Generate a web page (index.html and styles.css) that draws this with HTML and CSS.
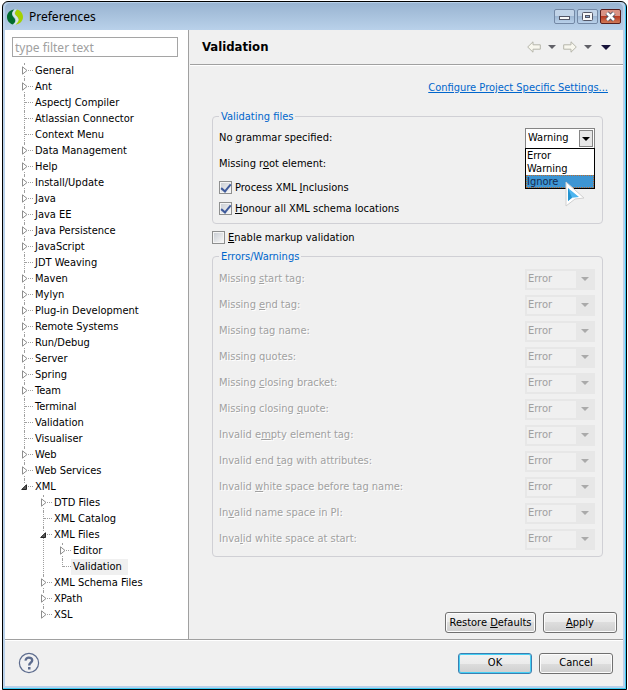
FILE: index.html
```html
<!DOCTYPE html>
<html lang="en">
<head>
<meta charset="utf-8">
<title>Preferences</title>
<link rel="stylesheet" href="styles.css">
<script src="preferences.js" defer></script>
</head>
<body>
<div class="window">
  <header class="titlebar">
    <svg class="logo" width="16" height="16" viewBox="0 0 16 16" aria-hidden="true">
      <path d="M7.500.5C3 .8 0 4 0 8c0 3.600 2.400 6.500 5.500 7.400C7.500 14.500 8.500 13 8.200 11 7.800 8.500 4.800 7.500 5 4.500 5.200 2.500 6.500 1.500 7.500.5z" fill="#006b2d"/>
      <path d="M10 .6C13.500 1.500 16 4.500 16 8c0 4-3.200 7.200-7.500 7.600C10 14 12 12.500 11.700 10.300 11.300 7.500 8 6.500 8 4.200 8.100 2.500 9.500 1.600 10 .6z" fill="#a4d100"/>
      <path d="M7.500.5C6.500 2 5.200 3 5.500 5c.5 2.500 3.500 3.500 3.500 6 0 1.800-1 3.300-2.500 4.400h2C10 14 11.500 12.500 11.200 10.300 10.800 7.500 7.600 6.500 7.600 4.200 7.700 2.500 9 1.600 9.600.5z" fill="#d9e8e4"/>
    </svg>
    <h1>Preferences</h1>
    <div class="window-controls">
      <button type="button" aria-label="Minimize"><svg width="19" height="13" viewBox="0 0 19 13"><rect x="4.500" y="6.500" width="10" height="3" fill="#f8f8f8" stroke="#535666"/></svg></button>
      <button type="button" aria-label="Maximize"><svg width="19" height="13" viewBox="0 0 19 13"><rect x="4.500" y="2.500" width="10" height="8" rx="1" fill="#f8f8f8" stroke="#535666"/><rect x="7.500" y="5.500" width="4" height="2" fill="#8fa9cc" stroke="#535666"/></svg></button>
      <button type="button" class="close" aria-label="Close"><svg width="19" height="13" viewBox="0 0 19 13"><path d="M6 3l7 7M13 3l-7 7" stroke="#535666" stroke-width="4.500"/><path d="M6 3l7 7M13 3l-7 7" stroke="#fff" stroke-width="2.500"/></svg></button>
    </div>
  </header>
  <main class="panes">
    <nav class="sidebar" aria-label="Preference pages">
      <input class="filter" type="text" placeholder="type filter text" aria-label="Filter">
      <ul class="tree" id="tree"></ul>
    </nav>
    <section class="page">
      <div class="page-head">
        <h2>Validation</h2>
        <div class="history">
          <button type="button" aria-label="Back"><svg width="14" height="12" viewBox="0 0 14 12"><path d="M.7 6L6 .8v3h7.300v4.400H6v3z" fill="#f8f7ee" stroke="#b5b5aa"/></svg></button>
          <button type="button" aria-label="Back history"><svg width="8" height="4" viewBox="0 0 8 4"><path d="M0 0h8L4 4z" fill="#606067"/></svg></button>
          <button type="button" aria-label="Forward"><svg width="14" height="12" viewBox="0 0 14 12"><path d="M13.300 6L8 .8v3H.7v4.400H8v3z" fill="#f8f7ee" stroke="#b5b5aa"/></svg></button>
          <button type="button" aria-label="Forward history"><svg width="8" height="4" viewBox="0 0 8 4"><path d="M0 0h8L4 4z" fill="#606067"/></svg></button>
          <button type="button" class="menu" aria-label="Menu"><svg width="10" height="5" viewBox="0 0 10 5"><path d="M0 0h10L5 5z" fill="#17133a"/></svg></button>
        </div>
      </div>
      <form class="page-body">
        <a class="project-link" href="#">Configure Project Specific Settings...</a>
        <fieldset class="group">
          <legend>Validating files</legend>
          <div class="row">
            <label for="grammar">No <u>g</u>rammar specified:</label>
            <div class="combo">
              <select id="grammar"><option>Error</option><option selected>Warning</option><option>Ignore</option></select>
              <svg class="arrow" width="14" height="17" viewBox="0 0 14 17"><rect x=".5" y=".5" width="13" height="16" fill="#e7e7e7" stroke="#858585"/><path d="M3 7h8l-4 4z"/></svg>
              <ul class="dropdown"><li>Error</li><li>Warning</li><li class="active">Ignore</li></ul>
              <svg class="cursor" width="20" height="26" viewBox="0 0 20 26"><path d="M1 1l18 16-9 1-9 7z" fill="#fff" stroke="#d0d0d0"/><path d="M3 7l11 9-7 .7L3 20z" fill="#4db5ef"/><path d="M3 7l4 9.700L3 20z" fill="#2594d0"/></svg>
            </div>
          </div>
          <div class="row"><span>Missing r<u>o</u>ot element:</span></div>
          <label class="check"><input type="checkbox" checked><span>Process XML <u>I</u>nclusions</span></label>
          <label class="check"><input type="checkbox" checked><span><u>H</u>onour all XML schema locations</span></label>
        </fieldset>
        <label class="check enable"><input type="checkbox"><span><u>E</u>nable markup validation</span></label>
        <fieldset class="group severity" id="severity">
          <legend>Errors/Warnings</legend>
        </fieldset>
        <div class="page-actions">
          <button type="button" class="btn wide">Restore <u>D</u>efaults</button>
          <button type="button" class="btn short"><u>A</u>pply</button>
        </div>
      </form>
    </section>
  </main>
  <footer class="footer">
    <button type="button" class="help" aria-label="Help"><svg width="22" height="22" viewBox="0 0 22 22"><circle cx="11" cy="11" r="9.600" fill="#f1f1f2" stroke="#5d6c8e" stroke-width="1.200"/><path d="M7.700 8.600C7.500 4.600 14.200 4.700 14.200 8.300c0 2.400-3 2.400-3 5.200" fill="none" stroke="#5d6c8e" stroke-width="2.400"/><rect x="10" y="15" width="2.500" height="2.500" fill="#5d6c8e"/></svg></button>
    <button type="button" class="btn short primary">OK</button>
    <button type="button" class="btn short">Cancel</button>
  </footer>
</div>
</body>
</html>
```
FILE: preferences.js
```js
const pages = [
  ['General', []], ['Ant', []], ['AspectJ Compiler'], ['Atlassian Connector'], ['Context Menu'],
  ['Data Management', []], ['Help', []], ['Install/Update', []], ['Java', []], ['Java EE', []],
  ['Java Persistence', []], ['JavaScript', []], ['JDT Weaving'], ['Maven', []], ['Mylyn', []],
  ['Plug-in Development', []], ['Remote Systems', []], ['Run/Debug', []], ['Server', []],
  ['Spring', []], ['Team', []], ['Terminal'], ['Validation'], ['Visualiser'], ['Web', []],
  ['Web Services', []],
  ['XML', [
    ['DTD Files', []], ['XML Catalog'],
    ['XML Files', [['Editor', []], ['Validation', null, true]]],
    ['XML Schema Files', []], ['XPath', []], ['XSL', []],
  ]],
];

const closedIcon = '<svg class="twisty" width="6" height="9" viewBox="0 0 6 9"><path d="M.5.8v7.400L5 4.500z" fill="#fff" stroke="#8e8e8e"/></svg>';
const openIcon = '<svg class="twisty open" width="6" height="6" viewBox="0 0 6 6"><path d="M5.500.7v4.800H.7z" fill="#595959" stroke="#262626"/></svg>';

function renderTree(list, items) {
  for (const [name, children, selected] of items) {
    const item = document.createElement('li');
    const icon = children ? (children.length ? openIcon : closedIcon) : '';
    item.innerHTML = `<div class="node">${icon}<a href="#"${selected ? ' class="selected"' : ''}>${name}</a></div>`;
    if (children && children.length) {
      const sub = document.createElement('ul');
      renderTree(sub, children);
      item.append(sub);
    }
    list.append(item);
  }
}
renderTree(document.getElementById('tree'), pages);

const rules = [
  'Missing <u>s</u>tart tag:', 'Missing <u>e</u>nd tag:', 'Missing tag name:', 'Missing quotes:',
  'Missing <u>c</u>losing bracket:', 'Missing closing <u>q</u>uote:', 'Invalid e<u>m</u>pty element tag:',
  'Invalid end <u>t</u>ag with attributes:', 'Invalid <u>w</u>hite space before tag name:',
  'In<u>v</u>alid name space in PI:', 'Inva<u>l</u>id white space at start:',
];
const severity = document.getElementById('severity');
rules.forEach((text, i) => {
  severity.insertAdjacentHTML('beforeend', `<div class="row disabled"><label for="rule${i}">${text}</label>
    <div class="combo"><select id="rule${i}" disabled><option>Error</option></select>
    <svg class="arrow" width="17" height="17" viewBox="0 0 17 17"><rect width="17" height="17" fill="#e7e7e7"/><path d="M5 6h8l-4 4z" fill="#aaa"/></svg></div></div>`);
});
```
FILE: styles.css
```css
* { box-sizing: border-box; }

body {
  margin: 0;
  background: #fff;
  color: #000;
  font: 11px/16px "DejaVu Sans Condensed", "DejaVu Sans", sans-serif;
}

h1, h2, ul { margin: 0; padding: 0; font-size: inherit; font-weight: normal; list-style: none; }
button, input, select { font: inherit; color: inherit; }
button { cursor: default; }
svg { display: block; }
u { text-underline-offset: 1px; }

.window {
  display: flex;
  flex-direction: column;
  min-height: calc(100vh - 2px);
  margin: 1px 1px 1px 2px;
  border: 1px solid #000;
  border-radius: 6px 6px 0 0;
  background: #b9d1ea;
  padding: 1px 3px 3px 2px;
  box-shadow: inset -1px -1px 0 #3ccbf4;
}

.titlebar {
  display: flex;
  align-items: center;
  height: 27px;
  padding: 0 2px;
  border-radius: 5px 5px 0 0;
  background: linear-gradient(#99b4d1, #b9d1ea);
  gap: 6px;
}
.titlebar h1 { flex: 1; font-family: "Noto Sans", sans-serif; font-size: 12px; }
.window-controls { display: flex; gap: 2px; }
.window-controls button {
  padding: 0;
  border: 1px solid #7388a5;
  border-radius: 2px;
  background: linear-gradient(#c2d4e8 50%, #9fb8d4 50%, #b9d1ea);
}
.window-controls .close { border-color: #571e1e; background: linear-gradient(#d99284 50%, #b83a22 50%, #d07a58); }

.panes { display: flex; flex: 1; background: #f0f0f0; }

.sidebar {
  width: 184px;
  padding: 7px 10px 16px 7px;
  border-right: 1px solid #a0a0a0;
  background: #fff;
}
.filter {
  display: block;
  width: 100%;
  height: 20px;
  padding: 0 2px;
  border: 1px solid #a5a5a5;
  font-family: "Noto Sans", sans-serif;
  font-size: 12px;
}
.filter::placeholder { color: #a0a0a0; opacity: 1; }

.tree { padding: 6px 0 0 12px; }
.tree li { position: relative; }
.tree ul { padding-left: 19px; }
.tree li::before {
  content: "";
  position: absolute;
  top: 0;
  bottom: 0;
  left: 0;
  border-left: 1px dotted #a0a0a0;
}
.tree li:last-child::before { bottom: auto; height: 8px; }
.node { position: relative; display: flex; height: 16px; padding-left: 9px; }
.node::before {
  content: "";
  position: absolute;
  top: 7px;
  left: 1px;
  width: 8px;
  border-top: 1px dotted #a0a0a0;
}
.node a { padding: 0 2px; color: inherit; text-decoration: none; white-space: nowrap; }
.node .selected { padding-right: 6px; background: #f0f0f0; }
.twisty { position: absolute; top: 3px; left: -2px; background: #fff; }
.twisty.open { top: 5px; left: -3px; }

.page { display: flex; flex: 1; flex-direction: column; margin-left: 1px; }
.page-head {
  display: flex;
  align-items: center;
  justify-content: space-between;
  height: 35px;
  padding: 0 12px;
  border-bottom: 1px solid #a0a0a0;
  box-shadow: 0 1px 0 #fff;
}
.page-head h2 { font-size: 13px; font-weight: bold; }
.history { display: flex; align-items: center; gap: 7px; }
.history button { padding: 0; border: 0; background: none; }
.history .menu { margin-left: 2px; }

.page-body { display: flex; flex: 1; flex-direction: column; padding: 15px 20px 6px 22px; }
.project-link { align-self: flex-end; margin-right: -5px; color: #0066cc; }

.group {
  margin: 13px 0 0;
  padding: 1px 7px 4px 6px;
  border: 1px solid #d0d0d5;
  border-radius: 4px;
}
.severity { margin-top: 1px; padding-top: 2px; }
.group legend { height: 15px; padding: 0 2px; color: #0066cc; line-height: 15px; }
.row { display: flex; align-items: center; justify-content: space-between; height: 26px; }
.combo { position: relative; width: 70px; }
.combo select {
  display: block;
  width: 100%;
  height: 21px;
  padding: 0 2px;
  border: 1px solid #858585;
  border-radius: 0;
  background: #fff;
  appearance: none;
}
.combo .arrow { position: absolute; top: 2px; right: 2px; pointer-events: none; }
.dropdown { position: absolute; z-index: 1; top: 20px; left: 0; width: 100%; border: 1px solid #000; background: #fff; }
.dropdown li { height: 13px; padding-left: 1px; line-height: 13px; }
.dropdown .active { outline: 1px dotted #b86b30; outline-offset: -1px; background: #3d95d3; color: #172b50; }
.cursor { position: absolute; z-index: 2; top: 53px; left: 40px; }

.check { display: flex; align-items: center; gap: 3px; height: 21px; }
.check input {
  display: grid;
  place-items: center;
  width: 13px;
  height: 13px;
  margin: 0;
  padding: 1px;
  border: 1px solid #8e8f8f;
  background: linear-gradient(135deg, #cbcfd5, #f6f6f6) content-box, #f4f4f4;
  appearance: none;
}
.check input:checked::before {
  content: "";
  width: 4px;
  height: 8px;
  margin-top: -2px;
  border: solid #3f5a9b;
  border-width: 0 2px 2px 0;
  transform: rotate(40deg);
}
.enable { margin-top: 3px; }

.disabled { color: #a0a0a0; text-shadow: 1px 1px 0 #fff; }
.disabled select { padding: 0 1px; border: 2px solid #e7e7e7; background: #f0f0f0; color: #a0a0a0; opacity: 1; }

.page-actions { display: flex; justify-content: flex-end; margin: auto -14px 0 0; gap: 7px; }
.btn {
  height: 21px;
  padding: 0 3px;
  border: 1px solid #707070;
  border-radius: 3px;
  background: linear-gradient(#f2f2f2, #ebebeb 50%, #ddd 50%, #cfcfcf);
  box-shadow: inset 0 0 0 1px #fcfcfc;
}
.btn.short { width: 74px; }
.btn.wide { min-width: 91px; }
.btn.primary { border-color: #3c7fb1; box-shadow: inset 0 0 0 1px #45d0f5; }

.footer {
  display: flex;
  align-items: center;
  height: 47px;
  padding: 0 10px 0 13px;
  border-top: 1px solid #a0a0a0;
  background: #f0f0f0;
  box-shadow: inset 0 1px 0 #fff;
  gap: 7px;
}
.help { margin: 0 auto 0 0; padding: 0; border: 0; background: none; }
```
